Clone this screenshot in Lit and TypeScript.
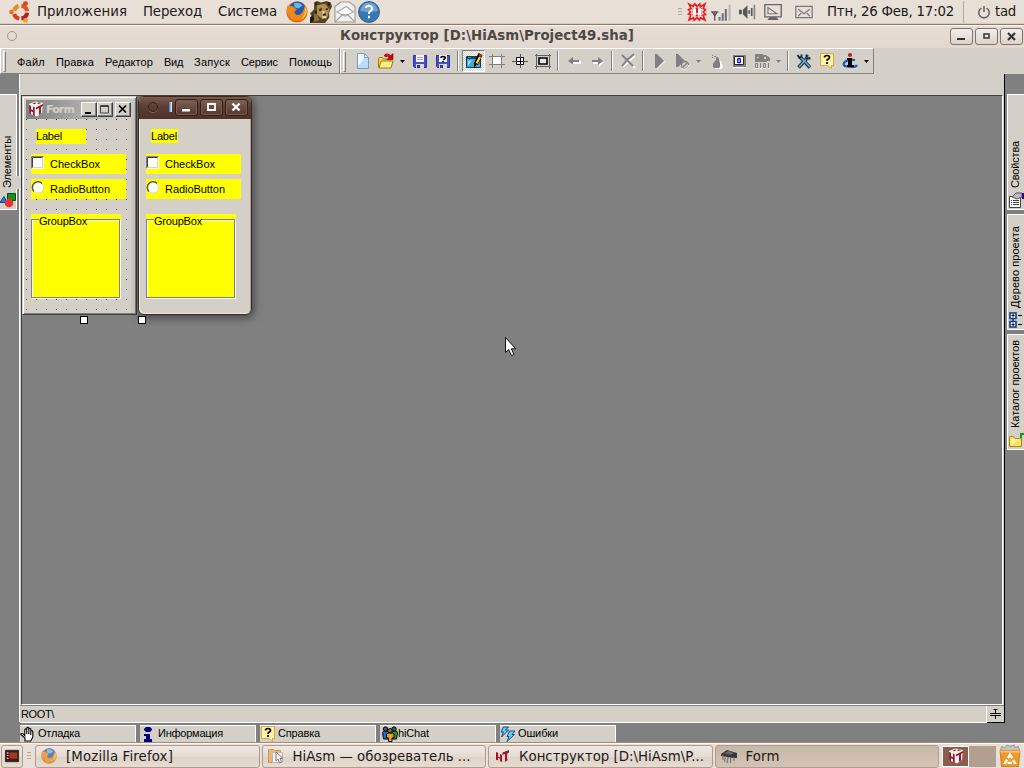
import { customElement, property } from "lit/decorators.js";
import { css, html, svg, LitElement, TemplateResult } from "lit";
import { classMap } from "lit/directives/class-map.js";

/**
 * A text run whose letter spacing is tuned to fill an exact width
 */
@customElement("ui-text")
export class UiText extends LitElement {
  static styles = css`
    :host {
      display: inline-block;
      white-space: pre;
      flex: none;
    }
  `;

  @property()
  text: string = "";

  /**
   * Length of the run in pixels, along the writing direction
   */
  @property({ type: Number })
  length: number = 0;

  firstUpdated() {
    const span = this.renderRoot.querySelector("span")!;
    const box = span.getBoundingClientRect();
    const natural = Math.max(box.width, box.height);
    const spacing = (this.length - natural) / this.text.length;
    span.style.letterSpacing = `${spacing.toFixed(3)}px`;
  }

  render() {
    return html`<span>${this.text}</span>`;
  }
}

const t = (text: string, length: number) =>
  html`<ui-text text=${text} .length=${length}></ui-text>`;

const logo = svg`
  <path fill="#f6f2f0" d="M1 3l6-2.500 8 1.500-1 10-5 3.500-6-2.500z"/>
  <path fill="#98182a" d="M1 4l2 .7v3.500l2 1V5.500l1.700.7V15l-1.700-.8v-3l-2-1v3L1.500 12zM8 6.500l7-3.500v2l-2 1v6.500l-2 1.500V7L8 8.500zM4.500 2.500l2.500-1 1.500.5-2.500 1.200zM9 2l2-.5 2 .5-2.500 1z"/>`;

const redLogo = svg`
  <path fill="#a01828" d="M2 4l2 .7v3.800l2 1V6l2 .7V14l-2-.8v-2.500l-2-1v2.500L2 12zM8.500 4.500L15 2v2.500l-1.500.7v7L11 14V6L8.500 7z"/>
  <path fill="#e8b8bc" d="M4 5h1v3H4zM13 6h1v5h-1z"/>`;

// All glyphs are drawn on a 16x16 board
const icons: Record<string, TemplateResult> = {
  logo,
  redLogo,
  doc: svg`<path fill="#b9dcf8" stroke="#6f9cd8" d="M2.500 .500h7l4 4v11h-11z"/><path fill="#eef8ff" d="M3 1h6v5l-5 6H3z"/><path fill="#fff" stroke="#6f9cd8" d="M9.500 .500v4h4z"/>`,
  open: svg`<path fill="#f8d248" stroke="#a87800" d="M.500 14.500v-9l1-1h3l1 1.500h7v8z"/><path fill="#fff08c" stroke="#a87800" d="M1 15l2-7h12l-2 7z"/><path fill="none" stroke="#7a0000" stroke-width="3" d="M7 3.500q2-3 5 0"/><path fill="none" stroke="#f01010" stroke-width="1.800" d="M7 3.500q2-3 5 0"/><path fill="#e00000" stroke="#7a0000" stroke-width=".6" d="M15 .500v6h-6z"/>`,
  save: svg`<path fill="#4b50bc" stroke="#3034a0" d="M1.500 2.500h13v12h-12l-1-1z"/><path fill="#f4f4fa" d="M4 2h8v7H4z"/><path fill="#a8a8bc" d="M5 4h6v1H5zM5 6h6v1H5z"/><path fill="#d4d8f0" d="M4 11h8v4H4z"/><path fill="#3034a0" d="M5 12h3v3H5z"/>`,
  saveAs: svg`<path fill="#4b50bc" stroke="#3034a0" d="M1.500 2.500h13v12h-12l-1-1z"/><path fill="#f4f4fa" d="M4 2h8v7H4z"/><path fill="none" stroke="#000" stroke-width="1.600" d="M6 5q0-1.500 2-1.500 2.200 0 2.200 1.500Q10.200 6 8 6.800M8 8v1.300"/><path fill="#d4d8f0" d="M4 11h8v4H4z"/><path fill="#3034a0" d="M5 12h3v3H5z"/>`,
  design: svg`<path fill="#48a8d8" stroke="#083c60" d="M.500 3.500h14v11H.500z"/><path fill="#104878" d="M1 4h12v2H1z"/><path fill="#a8dcf0" d="M2 8l4-1-4 6z"/><path fill="#38a040" d="M2 4h3v1H2z"/><path stroke="#000" stroke-width="4.400" d="M14.500 1L10 11"/><path stroke="#ffe020" stroke-width="2.200" d="M14 4L10.500 10.500"/><path stroke="#e03020" stroke-width="2.500" d="M14.700 1.500l-.8 2"/><path fill="#000" d="M8 9l3 2-3 4z"/>`,
  grid: svg`<path fill="#fff" d="M4 4h8v7H4z"/><path fill="none" stroke="#808080" d="M0 3.500h16M0 11.500h16M3.500 1v14M12.500 1v14"/>`,
  center: svg`<path fill="#fff" stroke="#000" d="M4.500 4.500h7v7h-7z"/><path stroke="#555" d="M0 8.500h16M8.500 1v14"/><path stroke="#000" d="M5 8.500h6M8.500 5v6"/>`,
  bounds: svg`<path fill="none" stroke="#606060" d="M0 2.500h16M0 13.500h16M1.500 1v15M14.500 1v15"/><path fill="#e4e4e4" stroke="#000" stroke-width="1.600" d="M4 5h8v6H4z"/>`,
  back: svg`<path fill="#fff" d="M3 9l4-3v2h8v3H7v2z"/><path fill="#808080" d="M2 8l5-4v3h6v2H7v3z"/>`,
  forward: svg`<path fill="#fff" d="M15 9l-5 5v-3H4V9z"/><path fill="#808080" d="M14 8L9 4v3H3v2h6v3z"/>`,
  cut: svg`<path fill="none" stroke="#fff" stroke-width="1.500" d="M3 3l12 12M15 3L3 14"/><path fill="none" stroke="#808080" stroke-width="1.800" d="M2 2l11 11M14 1Q7 6 2 13"/>`,
  play: svg`<path fill="#fff" d="M6 2l8 7-8 7z"/><path fill="#808080" d="M4 1h2l7 7-7 7H4z"/>`,
  playOff: svg`<path fill="#808080" d="M2 1h2l7 7-7 6H2z"/><circle cx="11" cy="12" r="3.500" fill="#d4d0c8" stroke="#808080" stroke-width="1.300"/><path stroke="#808080" stroke-width="1.300" d="M9 14l4-4"/><path fill="none" stroke="#fff" d="M8 16q6 1 7-4"/>`,
  bomb: svg`<path fill="#fff" d="M7 8h6l2 6-2 2H7z"/><path fill="#808080" d="M6 9l2-2h3l1 3v4l-1 1H6l-1-1v-3zM8 5h3v2H8zM4 2h1v1H4zM6 3h2v1H6zM8 4h2v1H8zM4 4h1v1H4z"/>`,
  zero: svg`<path fill="#808080" d="M2 2h13v12H2z"/><path fill="#fff" stroke="#000" stroke-width=".8" d="M3.500 3.500h9v8h-9z"/><path fill="none" stroke="#0000e0" stroke-width="1.300" d="M6.700 6q1.500-1 2.600 0v3.200q-1.300 1-2.600 0z"/><path fill="#fff" d="M2 14h13v1H2z"/>`,
  binary: svg`<path fill="#808080" d="M1 1h8v1h3l4 3v3h-3v1H1z"/><path fill="#d4d0c8" d="M3 4h2v1H3zM10 4h2v2h-2z"/><path fill="none" stroke="#808080" d="M1.500 10.500h2v4h-2zM6.500 10v5M9.500 10.500h2v4h-2zM14.500 10v5"/><path stroke="#fff" d="M1 15.500h4M6 15.500h2M9 15.500h3M14 15.500h2"/>`,
  tools: svg`<path fill="none" stroke="#18344c" stroke-width="3.600" d="M4 4l10 10.500M13 3L2.500 14.500"/><path stroke="#78a4c8" stroke-width="1.600" d="M4 4l10 10M12 4L3 14"/><path fill="none" stroke="#18344c" stroke-width="2" d="M10.500 1.500v4h4M1.500 2l2 3 2-1V1.500"/><path stroke="#d4d0c8" stroke-width="1.500" d="M12.500 4l3-3"/>`,
  help: svg`<path fill="#fff3a8" stroke="#d8a840" d="M1.500 .500h13v12h-2v3l-4-3h-7z"/><path fill="none" stroke="#000" stroke-width="1.700" d="M5.500 4.500q0-2 2.500-2t2.500 2q0 1.300-2.300 2.300v1.200M8 9v2"/>`,
  info: svg`<path fill="none" stroke="#1858b0" stroke-width="2.200" d="M13 7Q4 6 2 10t8 4q4 0 5-2"/><path fill="#000" d="M5 5h5v7h2v2H5v-2h1V7H5z"/><circle cx="8" cy="2" r="2" fill="#c81818"/>`,
  hand: svg`<path fill="#fff" stroke="#000" stroke-width="1.100" d="M5 15V12L.800 8.500q0-1.500 2-.8l2 2V3.500q1-1.200 2 0V8 2q1-1.200 2 0v6-5q1-1.200 2 0v6-4q1.200-1 2 .5V11l-2 4z"/>`,
  bigInfo: svg`<path fill="#000080" d="M6 1h4l2 2v1l-2 2H6L4 4V3zM4 8h6v5h2v3H4v-3h2v-3H4z"/>`,
  people: svg`<path fill="#1870d8" stroke="#000" d="M.500 6l2-1h4v8h-5z"/><path fill="#20a040" stroke="#000" d="M9.500 5h5l1 2-1 6h-4z"/><path fill="#f0a018" stroke="#000" d="M4.500 8l2-1h4l1.500 1v4h-2v3.500H6.500V12h-2z"/><circle cx="3.500" cy="3" r="2.200" fill="#555" stroke="#000"/><circle cx="12" cy="3" r="2.200" fill="#555" stroke="#000"/><circle cx="8" cy="4.800" r="2.200" fill="#777" stroke="#000"/>`,
  bolts: svg`<path fill="#70c8f8" stroke="#083c80" stroke-width=".9" d="M3.500 1h5l-3 3h3l-7 7 2-5H1zM9.500 5h5.500l-3 3.500h2.500l-7.500 7 2-5H7z"/>`,
  shapes: svg`<path fill="#2080e8" stroke="#104080" d="M0 10.500h7L4 4.500z"/><path fill="#189020" stroke="#005000" d="M7.500 1.500h8v7h-8z"/><circle cx="9" cy="11" r="4.300" fill="#f03030"/>`,
  props: svg`<path fill="#fff" stroke="#444" d="M1.500 4.500h11v11h-11z"/><path stroke="#444" d="M3 8.500h1m1 0h6M3 10.500h1m1 0h6M3 12.500h1m1 0h6"/><path fill="#bbb" stroke="#555" d="M4 5l4-4h6v4l-5 2z"/><path fill="#300090" d="M14 1h2v6h-2z"/>`,
  tree: svg`<path stroke="#003890" stroke-width="1.500" d="M5 5v7"/><path fill="#fff" stroke="#003890" stroke-width="1.500" d="M2 1h6v5.500H2zM2 9.500h6V15H2z"/><path stroke="#000" d="M3.500 3.500h3M5 2v3M3.500 12.500h3M5 11v3M10 3.500h4M10 12.500h4"/>`,
  folder: svg`<path fill="#f8e060" stroke="#b08820" d="M1.500 14.500v-10h4l1.500 2h6.500v8z"/><path fill="#fff8a0" d="M3 7h8L4 13z"/><path fill="#189020" d="M12 1h4v2h-2v3h-2z"/>`,
  ubuntu: svg`<g fill="none" stroke-width="3"><path stroke="#f08a24" d="M3.700 7A4.800 4.800 0 0 1 7 3.600"/><path stroke="#e05a1c" d="M9 3.400A4.800 4.800 0 0 1 13.200 7.500"/><path stroke="#b81c28" d="M13.200 8.500A4.800 4.800 0 0 1 9 12.700"/><path stroke="#d8401c" d="M7.500 12.700A4.800 4.800 0 0 1 3.700 9.500"/></g><circle cx="1.800" cy="8" r="1.700" fill="#f0701c"/><circle cx="12" cy="1.900" r="1.800" fill="#d84818"/><circle cx="12" cy="14.100" r="1.800" fill="#f0a030"/>`,
  firefox: svg`<circle cx="8" cy="8" r="7.700" fill="#e06a10"/><circle cx="8.300" cy="6.500" r="6.200" fill="#245ca8"/><path fill="#6cb4e8" d="M6 1.500q4-1 6 2l-3 2-3-1z"/><path fill="#f08818" d="M1 3l2 1q2-1 3 1l2 1-2 2q1 3 4 2 2-1 3-4 1-2 0-4 4 5 1 9-3 4-8 3-7-3-5-11z"/><path fill="#ffc840" d="M14 4q2 3 0 7l-3 3q3-4 3-10z"/>`,
  cheetah: svg`<path fill="#54431f" d="M3 1l2-1 3 1 4-1 3 1 1 3-2 4v4l-3 4H1l1-4-2-3 3-3z"/><path fill="#b08e50" d="M5 3l6-1 3 4-1 5-4 2-4-3z"/><path fill="#8c7040" d="M3 9l2 1 2 4-4 1z"/><path fill="#241c0c" d="M7 5.500h2L8 7H6.500zM11.500 5.500H13v1h-1.500zM9.500 9h2v1.500h-2zM0 12l2-2 1 3-2 3H0zM13 1h1.500v2H13zM4 1h1v2H4zM5 7v2H4V7z"/><path fill="#ece0c0" d="M9 7.500h1.500V9H9zM9 11h3v1.500H9z"/>`,
  letter: svg`<path fill="#f2f2f0" stroke="#999" stroke-width=".8" d="M.700 4L5 .700h6L15.300 4v11.300H.700z"/><path fill="#fff" stroke="#aaa" stroke-width=".8" d="M2 8l7-4 5 4-6 3z"/><path fill="none" stroke="#999" stroke-width=".8" d="M1 15l5-5h4l5 5"/>`,
  question: svg`<circle cx="8" cy="8" r="7.600" fill="#3a78b4" stroke="#285c90" stroke-width=".7"/><path fill="#6fa4d4" d="M1.500 7Q3 1 8 1T14.500 7Q8 9 1.500 7z"/><path fill="none" stroke="#fff" stroke-width="1.500" d="M5.700 5q.3-1.500 2.300-1.500t2.300 2q0 1-1.300 1.800T8 9.500M8 10.800v1.700"/>`,
  alert: svg`<path fill="#fff" stroke="#f01818" stroke-width="1.500" d="M1 1l3.500 2L6 .8 8 3l2.500-2L11 3.500 15 1l-1.500 4 2 1-2 2 2 2.200-2.200.6L15 15l-4-2-1 2.200L8 13l-2.500 2.200L5 13l-4 2 1.500-4.500-2-.8L2.500 8 .5 6l2.200-1z"/><path fill="none" stroke="#f01818" stroke-width=".7" stroke-dasharray="1 1" d="M4 4.500h8v7H4z"/><path stroke="#f01818" stroke-width="1.800" d="M8 4v5m0 1.300v1.700"/>`,
  signal: svg`<path fill="none" stroke="#555" d="M1 8l2 3 2-3M0 7.800h6M3 8v7"/><path fill="#777" d="M6 12h1.600v3H6zM8.500 9h1.700v6H8.500zM11 5.500h1.700V15H11z"/><path fill="#c0b8b0" d="M14 2h1.700v13H14z"/>`,
  sound: svg`<path fill="#555" d="M0 6h2.500v4H0zM3.500 6l4-4v12l-4-4z"/><path stroke="#555" stroke-width="1.500" d="M9 6.500v3M11.300 4.500v7"/><path stroke="#888" stroke-width="1.500" d="M13.700 1.500v13"/>`,
  monitor: svg`<path fill="none" stroke="#666" stroke-width="1.200" d="M.700 1.500h14.600v10.800H.700z"/><path fill="none" stroke="#777" d="M3.500 4v5.500h8z"/><path fill="#666" d="M5 12.500h6l2 2.500H3z"/>`,
  envelope: svg`<path fill="none" stroke="#777" stroke-width="1.100" d="M.700 3h14.600v10H.700zM3 5.500l5 4 5-4M3 11.500l2.500-2.500M13 11.500l-2.500-2.500"/>`,
  power: svg`<path fill="none" stroke="#666" stroke-width="1.800" d="M5 3.500A6 6 0 1 0 11 3.500M8 1v7"/>`,
  explorer: svg`<path fill="#f0a850" stroke="#b87830" d="M.500 1.500h5l1 1h6v12h-12z"/><path fill="#fff" stroke="#b0a8a0" d="M4.500 4.500h10v10h-10z"/><path fill="#fff" stroke="#555" d="M8 4v9l2-2 1.500 4 2-1-1.500-3.500h3z"/>`,
  chip: svg`<path fill="#383838" d="M0 6l6-4 10 3v5l-4 0L0 8z"/><path fill="#686868" d="M3 5l5-2 5 2-4 2z"/><path stroke="#777" stroke-width="1.200" fill="none" d="M2 7v5M4.500 8l-1 6M7 9l-1 6M9.500 9v6M13 9v4"/>`,
  trash: svg`<path fill="#c4c4c4" stroke="#888" stroke-width=".6" d="M1 4l1-3 2 1 2-2 2 1 3-1 1 2 2-1 1 3z"/><path fill="#f09828" stroke="#c87010" stroke-width=".6" d="M.800 4h14.400l-1 11.700H1.800z"/><path fill="#ffc070" d="M1 4h14v1.500H1z"/><path fill="none" stroke="#fff" stroke-width="1.700" stroke-dasharray="3.200 1.300" d="M8 7l3.500 6h-7z"/>`,
  desktop: svg`<path fill="#4a1810" stroke="#222" d="M.500 1.500h15v13H.500z"/><path fill="#a03828" d="M5 4h9v7H5z"/><path fill="#fff" d="M2 4h2v1H2zM2 7h2v1H2zM2 10h2v1H2z"/>`,
};

const icon = (name: string, size = "s16") =>
  html`<svg class="icon ${size}" viewBox="0 0 16 16">${icons[name]}</svg>`;

const iconStyles = css`
  .icon {
    display: block;
    flex: none;
    overflow: visible;
  }
  .s14 {
    width: 14px;
    height: 14px;
  }
  .s16 {
    width: 16px;
    height: 16px;
  }
  .s18 {
    width: 18px;
    height: 18px;
  }
  .s20 {
    width: 20px;
    height: 20px;
  }
  .s22 {
    width: 22px;
    height: 22px;
  }
`;

@customElement("desk-panel")
export class DeskPanel extends LitElement {
  static styles = [
    iconStyles,
    css`
      :host {
        display: flex;
        align-items: center;
        height: 24px;
        background: #e8dfd7;
        border-bottom: 1px solid #8e7a68;
        box-shadow: inset 0 -1px #d8cbbf;
        font: 13.33px/22px "DejaVu Sans", sans-serif;
        color: #1c1a18;
      }
      .menu {
        display: flex;
        gap: 16px;
        padding: 0 9px 0 6px;
      }
      .brand {
        padding-left: 9px;
      }
      .launchers {
        display: flex;
        gap: 2px;
        margin-right: auto;
      }
      .grip {
        width: 4px;
        height: 8px;
        margin-right: 6px;
        background: repeating-linear-gradient(#b5a898 0 1px, #e8dfd7 1px 3px);
      }
      .tray {
        display: flex;
        align-items: center;
      }
      .signal {
        margin: 0 8px 0 5px;
      }
      .monitor {
        margin: 0 13px 0 7px;
      }
      .clock {
        margin-left: 14px;
      }
      .divider {
        width: 1px;
        height: 22px;
        margin: 0 13px 0 9px;
        background: #b8a99a;
      }
      .user {
        margin: 0 8px 0 4px;
      }
    `,
  ];

  render() {
    return html`
      <span class="brand">${icon("ubuntu", "s22")}</span>
      <nav class="menu">
        ${t("Приложения", 90)}${t("Переход", 59)}${t("Система", 59)}
      </nav>
      <div class="launchers">
        ${icon("firefox", "s22")}${icon("cheetah", "s22")}
        ${icon("letter", "s22")}${icon("question", "s22")}
      </div>
      <div class="tray">
        <span class="grip"></span>
        ${icon("alert", "s18")}
        <span class="signal">${icon("signal", "s20")}</span>
        ${icon("sound", "s18")}
        <span class="monitor">${icon("monitor", "s18")}</span>
        ${icon("envelope", "s18")}
        <span class="clock">${t("Птн, 26 Фев, 17:02", 127)}</span>
        <span class="divider"></span>
        ${icon("power", "s14")}
        <span class="user">${t("tad", 21)}</span>
      </div>
    `;
  }
}

@customElement("title-bar")
export class TitleBar extends LitElement {
  static styles = css`
    :host {
      display: flex;
      align-items: center;
      height: 22px;
      border-top: 1px solid #fbf8f5;
      background: linear-gradient(#e6dcd3, #e2d8cf);
      font: bold 13.33px/20px "DejaVu Sans", sans-serif;
      color: #4c4844;
    }
    .dot {
      width: 8px;
      height: 8px;
      margin: 0 0 2px 7px;
      border: 1px solid #a09890;
      border-radius: 50%;
    }
    .title {
      margin: 0 auto 3px 323px;
    }
    .buttons {
      display: flex;
      gap: 2px;
      padding: 0 1px 2px 0;
    }
    .button {
      box-sizing: border-box;
      display: flex;
      width: 23px;
      height: 17px;
      border: 1px solid #7c736c;
      border-radius: 3px;
      background: linear-gradient(#f4eeea, #dcd2ca);
    }
  `;

  render() {
    const glyphs = [
      svg`<path fill="#333" d="M6 9h8v2H6z"/>`,
      svg`<path fill="none" stroke="#333" stroke-width="1.500" d="M8 5h5v4H8z"/>`,
      svg`<path fill="none" stroke="#333" stroke-width="2.200" d="M7 4l7 7M14 4l-7 7"/>`,
    ];
    return html`
      <span class="dot"></span>
      <span class="title">${t("Конструктор [D:\\HiAsm\\Project49.sha]", 294)}</span>
      <div class="buttons">
        ${glyphs.map(
          (g) => html`<span class="button"
            ><svg width="21" height="15">${g}</svg></span
          >`
        )}
      </div>
    `;
  }
}

@customElement("tool-bars")
export class ToolBars extends LitElement {
  static styles = [
    iconStyles,
    css`
      :host {
        display: flex;
        height: 26px;
        background: #d4d0c8;
        font: 11px/14px "Liberation Sans", sans-serif;
        color: #000;
      }
      .bar {
        box-sizing: border-box;
        display: flex;
        align-items: center;
        height: 26px;
        border: 1px solid #808080;
        border-top-color: #fff;
        border-left-color: #fff;
      }
      .menu {
        width: 340px;
        gap: 11px;
      }
      .menu ui-text {
        padding-top: 1px;
      }
      .tools {
        width: 534px;
      }
      .handle {
        width: 1px;
        height: 19px;
        border: 1px solid #fff;
        border-right-color: #808080;
        border-bottom-color: #808080;
      }
      .menu .handle {
        margin: 0 0 0 2px;
      }
      .tools .handle {
        margin: 0 5px 0 2px;
      }
      .slot {
        box-sizing: border-box;
        flex: none;
        display: flex;
        align-items: center;
        justify-content: center;
        width: 23px;
        height: 22px;
      }
      .pressed {
        border: 1px solid #808080;
        border-right-color: #fff;
        border-bottom-color: #fff;
        background: repeating-conic-gradient(#fff 0 25%, #d4d0c8 0 50%) 0 0 /
          2px 2px;
      }
      .drop {
        flex: none;
        width: 11px;
        display: flex;
        justify-content: center;
      }
      .sep {
        flex: none;
        box-sizing: border-box;
        width: 2px;
        height: 20px;
        margin: 0 3px;
        border-left: 1px solid #808080;
        border-right: 1px solid #fff;
      }
    `,
  ];

  tool(name: string) {
    switch (name) {
      case "|":
        return html`<span class="sep"></span>`;
      case "v":
      case "-v":
        return html`<span class="drop"
          ><svg width="5" height="3">
            <path fill=${name === "v" ? "#000" : "#808080"} d="M0 0h5L2.500 3z" /></svg
        ></span>`;
    }
    const classes = { slot: true, pressed: name === "design" };
    return html`<span class=${classMap(classes)}>${icon(name)}</span>`;
  }

  render() {
    const menu: [string, number][] = [
      ["Файл", 28],
      ["Правка", 38],
      ["Редактор", 48],
      ["Вид", 19],
      ["Запуск", 36],
      ["Сервис", 37],
      ["Помощь", 43],
    ];
    const tools =
      "doc open v save saveAs | design grid center bounds | back forward | cut | play playOff -v bomb zero binary -v | tools help info v";
    return html`
      <nav class="bar menu">
        <span class="handle"></span>
        ${menu.map(([text, length]) => t(text, length))}
      </nav>
      <div class="bar tools">
        <span class="handle"></span>
        ${tools.split(" ").map((name) => this.tool(name))}
      </div>
    `;
  }
}

/**
 * Yellow controls shared by the designer form and the running one
 */
@customElement("form-body")
export class FormBody extends LitElement {
  static styles = css`
    :host {
      box-sizing: border-box;
      display: block;
      padding: 10px 0 0 5px;
      font: 11px/15px "Liberation Sans", sans-serif;
      color: #000;
    }
    .label {
      width: 50px;
      height: 15px;
      margin-left: 5px;
      background: #ff0;
    }
    .tight {
      width: 27px;
      height: 14px;
      margin-bottom: 11px;
    }
    .row {
      display: flex;
      align-items: center;
      width: 95px;
      height: 20px;
      margin-top: 10px;
      background: #ff0;
    }
    .row + .row {
      margin-top: 5px;
    }
    .mark {
      display: block;
      margin: 0 6px 3px 0;
    }
    .row + .row .mark {
      margin-bottom: 3px;
    }
    .group {
      box-sizing: border-box;
      width: 90px;
      height: 85px;
      margin-top: 15px;
      padding-top: 5px;
      background: #ff0;
    }
    .frame {
      box-sizing: border-box;
      width: 89px;
      height: 79px;
      border: 1px solid #808080;
      box-shadow: inset 1px 1px #fff, 1px 1px #fff;
    }
    .caption {
      display: block;
      width: 47px;
      height: 11px;
      margin: -5px 0 0 7px;
      line-height: 12px;
      background: #ff0;
    }
  `;

  @property({ type: Boolean })
  running: boolean = false;

  render() {
    return html`
      <div class=${classMap({ label: true, tight: this.running })}>
        ${t("Label", 26)}
      </div>
      <div class="row">
        <svg class="mark" width="13" height="13">
          <path fill="#fff" d="M0 0h13v13H0z" />
          <path fill="none" stroke="#808080" d="M.5 12.500V.5h12" />
          <path fill="none" stroke="#404040" d="M1.500 11.500v-10h10" />
          <path fill="none" stroke="#d4d0c8" d="M2 11.500h9.500V2" />
        </svg>
        ${t("CheckBox", 50)}
      </div>
      <div class="row">
        <svg class="mark" width="13" height="13">
          <circle cx="7" cy="6.500" r="5.500" fill="#fff" stroke="#fff" />
          <path fill="none" stroke="#505050" stroke-width="1.500" d="M3 10.500A5.300 5.300 0 0 1 11 2.500" />
          <path fill="none" stroke="#d4d0c8" d="M3.500 10.500A5 5 0 0 0 11 3" />
        </svg>
        ${t("RadioButton", 60)}
      </div>
      <div class="group">
        <div class="frame"><span class="caption">${t("GroupBox", 48)}</span></div>
      </div>
    `;
  }
}

@customElement("design-canvas")
export class DesignCanvas extends LitElement {
  static styles = [
    iconStyles,
    css`
      :host {
        display: block;
        position: relative;
        overflow: hidden;
        background: #808080;
      }
      .form {
        box-sizing: border-box;
        position: absolute;
        left: 0;
        top: 0;
        width: 115px;
        height: 219px;
        padding: 2px;
        border: 1px solid #404040;
        border-top-color: #d4d0c8;
        border-left-color: #d4d0c8;
        box-shadow: inset 1px 1px #fff, inset -1px -1px #808080;
        background: #d4d0c8;
      }
      .caption {
        display: flex;
        align-items: center;
        height: 19px;
        margin: 1px 0 0 1px;
        background: linear-gradient(90deg, #808080, #c0c0c0 75%, #d4d0c8);
        font: bold 11px/18px "DejaVu Sans", sans-serif;
        color: #d4d0c8;
      }
      .caption .icon {
        margin: 0 2px 2px 2px;
      }
      .keys {
        display: flex;
        margin: 0 3px 1px auto;
      }
      .key {
        box-sizing: border-box;
        display: flex;
        width: 16px;
        height: 15px;
        border: 1px solid #404040;
        border-top-color: #fff;
        border-left-color: #fff;
        box-shadow: inset -1px -1px #808080;
        background: #d4d0c8;
      }
      .key:last-child {
        margin-left: 2px;
      }
      .client {
        height: 193px;
        margin: 0 3px 0 1px;
        background: conic-gradient(from 270deg at 1px 1px, #000 90deg, transparent 0) 0 0 /
          10px 10px;
      }
      .running {
        box-sizing: border-box;
        position: absolute;
        left: 116px;
        top: 0;
        width: 114px;
        height: 219px;
        border: 1px solid #3c2a24;
        border-radius: 6px;
        background: #d4d0c8;
        box-shadow: inset 1px -1px #f0ece4, inset -1px 0 #a8a098,
          1px 2px 9px 1px rgba(0, 0, 0, 0.45);
        overflow: hidden;
      }
      .head {
        display: flex;
        align-items: center;
        gap: 2px;
        height: 22px;
        padding-right: 3px;
        background: linear-gradient(#7c5a4c, #5c4034 40%, #4c3228);
      }
      .head .dot {
        width: 8px;
        height: 8px;
        margin: 0 9px 2px 9px;
        border: 1px solid #382018;
        border-radius: 50%;
        box-shadow: 0 1px #80665a;
      }
      .head .cut {
        width: 3px;
        height: 10px;
        margin: 0 1px 3px 0;
        background: linear-gradient(90deg, #3078b0, #f8fcff);
      }
      .head .btn {
        box-sizing: border-box;
        display: flex;
        width: 23px;
        height: 17px;
        margin-bottom: 2px;
        border: 1px solid #35211a;
        border-radius: 3px;
        background: linear-gradient(#7c6054, #54382e);
        box-shadow: inset 0 0 0 1px #785c50;
      }
      .running form-body {
        padding-left: 7px;
      }
      .knob {
        box-sizing: border-box;
        position: absolute;
        top: 220px;
        width: 8px;
        height: 8px;
        border: 1px solid #000;
        background: #fff;
      }
      .k1 {
        left: 58px;
      }
      .k2 {
        left: 116px;
      }
      .pointer {
        position: absolute;
        left: 482px;
        top: 240px;
      }
    `,
  ];

  render() {
    return html`
      <div class="form">
        <div class="caption">
          ${icon("logo")}${t("Form", 28)}
          <div class="keys">
            <span class="key"
              ><svg width="14" height="13"><path fill="#000" d="M3 9h6v2H3z" /></svg
            ></span>
            <span class="key"
              ><svg width="14" height="13">
                <path fill="none" stroke="#404040" d="M2.500 2.500h8v7.500h-8zM2 3.500h9" /></svg
            ></span>
            <span class="key"
              ><svg width="14" height="13">
                <path fill="none" stroke="#000" stroke-width="1.700" d="M3 2.500l7 7M10 2.500l-7 7" /></svg
            ></span>
          </div>
        </div>
        <form-body class="client"></form-body>
      </div>
      <div class="knob k1"></div>
      <div class="running">
        <div class="head">
          <span class="dot"></span><span class="cut"></span>
          <span class="btn"
            ><svg width="21" height="15"><path fill="#fff" d="M6 9h8v2.500H6z" /></svg
          ></span>
          <span class="btn"
            ><svg width="21" height="15">
              <path fill="none" stroke="#fff" stroke-width="1.800" d="M7 4h7v6H7z" /></svg
          ></span>
          <span class="btn"
            ><svg width="21" height="15">
              <path fill="none" stroke="#fff" stroke-width="2.300" d="M6.500 3.500l7 7M13.500 3.500l-7 7" /></svg
          ></span>
        </div>
        <form-body running></form-body>
      </div>
      <div class="knob k2"></div>
      <svg class="pointer" width="14" height="22">
        <path fill="#fff" stroke="#111" d="M1.500 1.500v15l3.200-3 2.800 6.200 2.500-1.200-2.700-5.700h4.500z" />
      </svg>
    `;
  }
}

@customElement("side-dock")
export class SideDock extends LitElement {
  static styles = [
    iconStyles,
    css`
      :host {
        display: flex;
        flex-direction: column;
        gap: 4px;
        padding-top: 20px;
        background: #808080;
        font: 11px/14px "Liberation Sans", sans-serif;
        color: #000;
      }
      .tab {
        box-sizing: border-box;
        display: flex;
        flex-direction: column;
        align-items: center;
        justify-content: flex-end;
        gap: 4px;
        height: 116px;
        padding-bottom: 1px;
        border: 1px solid #fff;
        background: #d4d0c8;
      }
      .left {
        position: relative;
        width: 17px;
        border-left: none;
      }
      .left::after {
        content: "";
        position: absolute;
        left: 15px;
        top: 81px;
        width: 5px;
        height: 13px;
        border-radius: 2px;
        background: #d4d0c8;
      }
      .right {
        width: 17px;
        margin-left: 2px;
        border-right: none;
      }
      .text {
        writing-mode: vertical-rl;
        transform: rotate(180deg);
        margin-right: 3px;
      }
    `,
  ];

  @property()
  side: "left" | "right" = "left";

  @property({ attribute: false })
  tabs: [string, number, string][] = [];

  render() {
    return this.tabs.map(
      ([text, length, glyph]) => html`<div class="tab ${this.side}">
        <span class="text">${t(text, length)}</span>${icon(glyph)}
      </div>`
    );
  }
}

@customElement("bottom-tabs")
export class BottomTabs extends LitElement {
  static styles = [
    iconStyles,
    css`
      :host {
        display: flex;
        gap: 4px;
        height: 17px;
        padding: 2px 0 0 20px;
        background: #808080;
        font: 11px/14px "Liberation Sans", sans-serif;
        color: #000;
      }
      .tab {
        box-sizing: border-box;
        display: flex;
        align-items: center;
        gap: 2px;
        width: 116px;
        height: 17px;
        border: 1px solid #fff;
        border-left: none;
        border-bottom: none;
        background: #d4d0c8;
      }
      .tab ui-text {
        margin-bottom: 2px;
      }
      .snug {
        gap: 0;
        padding-left: 2px;
      }
    `,
  ];

  render() {
    const tabs: [string, number, string][] = [
      ["Отладка", 42, "hand"],
      ["Информация", 65, "bigInfo"],
      ["Справка", 42, "help"],
      ["hiChat", 31, "people"],
      ["Ошибки", 40, "bolts"],
    ];
    return tabs.map(
      ([text, length, glyph]) => html`<div
        class=${classMap({ tab: true, snug: glyph === "people" })}
      >
        ${icon(glyph)}${t(text, length)}
      </div>`
    );
  }
}

@customElement("task-bar")
export class TaskBar extends LitElement {
  static styles = [
    iconStyles,
    css`
      :host {
        box-sizing: border-box;
        display: flex;
        align-items: center;
        height: 26px;
        padding: 1px 2px 0 1px;
        border-top: 1px solid #a08c7a;
        box-shadow: inset 0 1px #fbf7f3;
        background: #e8dfd7;
        font: 13.33px/20px "DejaVu Sans", sans-serif;
        color: #1c1a18;
      }
      .show,
      .task {
        box-sizing: border-box;
        display: flex;
        align-items: center;
        height: 23px;
        border: 1px solid #b09c8c;
        border-radius: 3px;
        background: linear-gradient(#efe8e2, #e6dbd2 50%, #dfd3c8 51%, #e6dcd3);
      }
      .show {
        justify-content: center;
        width: 22px;
      }
      .grip {
        width: 4px;
        height: 8px;
        margin: 0 4px;
        background: repeating-linear-gradient(#b5a898 0 1px, #e8dfd7 1px 3px);
      }
      .task {
        gap: 9px;
        width: 224.500px;
        margin-right: 2px;
        padding-left: 5px;
      }
      .task ui-text {
        padding-top: 1px;
      }
      .faded .icon {
        opacity: 0.7;
      }
      .active {
        background: linear-gradient(#c8b7a8, #d2c3b6);
      }
      .pager {
        display: flex;
        width: 54px;
        height: 21px;
        margin: 0 3px 0 1px;
        background: #b29f8f;
      }
      .desk {
        box-sizing: border-box;
        display: flex;
        align-items: center;
        justify-content: center;
        width: 27px;
        border: 1px solid #fff;
        background: #8c5c4c;
      }
    `,
  ];

  render() {
    const tasks: [string, number, string][] = [
      ["[Mozilla Firefox]", 107, "firefox"],
      ["HiAsm — обозреватель ...", 178, "explorer"],
      ["Конструктор [D:\\HiAsm\\P...", 185, "redLogo"],
      ["Form", 34, "chip"],
    ];
    return html`
      <span class="show">${icon("desktop", "s14")}</span>
      <span class="grip"></span>
      ${tasks.map(
        ([text, length, glyph]) => html`<div
          class=${classMap({
            task: true,
            faded: glyph === "firefox" || glyph === "explorer",
            active: glyph === "chip",
          })}
        >
          ${icon(glyph)}${t(text, length)}
        </div>`
      )}
      <div class="pager"><span class="desk">${icon("logo", "s16")}</span></div>
      ${icon("trash", "s22")}
    `;
  }
}

@customElement("app-root")
export class AppRoot extends LitElement {
  static styles = css`
    :host {
      display: flex;
      flex-direction: column;
      width: 1024px;
      height: 768px;
      overflow: hidden;
      background: #d4d0c8;
    }
    .middle {
      flex: 1;
      display: grid;
      grid-template-columns: 19px 1fr 19px;
      min-height: 0;
      background: #808080;
    }
    .editor {
      display: flex;
      flex-direction: column;
      border-left: 1px solid #fff;
      border-right: 1px solid #000;
      border-bottom: 1px solid #000;
      background: #d4d0c8;
    }
    .strip {
      flex: none;
      height: 21px;
    }
    .view {
      flex: 1;
      display: grid;
      margin: 0 1px 0 1px;
      border-top: 1px solid #404040;
      border-left: 1px solid #404040;
      border-right: 1px solid #fff;
      border-bottom: 1px solid #fff;
    }
    .status {
      display: flex;
      align-items: center;
      height: 16px;
      border-top: 1px solid #808080;
      font: 11px/16px "Liberation Sans", sans-serif;
      color: #000;
    }
    .path {
      flex: 1;
      padding-left: 1px;
      border-right: 1px solid #fff;
      border-bottom: 1px solid #fff;
    }
    .split {
      display: block;
      margin: 0 3px;
    }
  `;

  leftTabs = [["Элементы", 52, "shapes"]];

  rightTabs = [
    ["Свойства", 47, "props"],
    ["Дерево проекта", 82, "tree"],
    ["Каталог проектов", 88, "folder"],
  ];

  render() {
    return html`
      <desk-panel></desk-panel>
      <title-bar></title-bar>
      <tool-bars></tool-bars>
      <main class="middle">
        <side-dock side="left" .tabs=${this.leftTabs}></side-dock>
        <div class="editor">
          <div class="strip"></div>
          <div class="view"><design-canvas></design-canvas></div>
          <div class="status">
            <span class="path">${t("ROOT\\", 33)}</span>
            <svg class="split" width="11" height="12">
              <path stroke="#000" d="M0 5.500h11M0 7.500h11M5.500 1v4M5.500 8v3M3.500 1.500h4" />
            </svg>
          </div>
        </div>
        <side-dock side="right" .tabs=${this.rightTabs}></side-dock>
      </main>
      <bottom-tabs></bottom-tabs>
      <task-bar></task-bar>
    `;
  }
}
